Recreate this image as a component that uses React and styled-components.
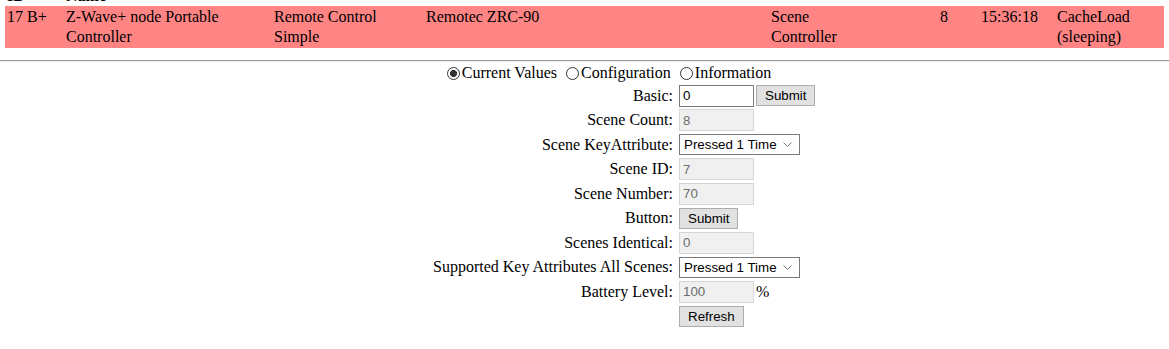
import React from 'react';
import styled, { createGlobalStyle } from 'styled-components';

const GlobalStyle = createGlobalStyle`
  body {
    margin: 0;
    background: #fff;
    color: #000;
    font-family: "Liberation Serif", "Times New Roman", serif;
    font-size: 16px;
  }
`;

const NodeTable = styled.table`
  width: calc(100% - 10px);
  margin: -14px 5px 0;
  border-collapse: collapse;
  border-spacing: 0;
  table-layout: fixed;
`;

const Col = styled.col`
  width: ${(props) => props.$w}px;
`;

const HeadCell = styled.th`
  padding: 0 2px 1px;
  line-height: 19px;
  text-align: left;
  font-weight: bold;
`;

const NodeRow = styled.tr`
  background: ${(props) => props.$color};
`;

const Cell = styled.td`
  padding: 1px 2px;
  line-height: 20px;
  vertical-align: top;
`;

const Rule = styled.hr`
  margin: 12px 0 0;
  height: 0;
  border: 0;
  border-top: 1px solid #9a9a9a;
  border-bottom: 1px solid #eeeeee;
`;

const RadioRow = styled.div`
  display: flex;
  justify-content: center;
  align-items: center;
  height: 22.5px;
  padding-left: 48px;
`;

const RadioOption = styled.label`
  display: flex;
  align-items: center;
  margin-right: 4px;
  white-space: nowrap;
`;

const Radio = styled.input.attrs({ type: 'radio' })`
  appearance: none;
  box-sizing: border-box;
  width: 13px;
  height: 13px;
  margin: 1px 2px 0 5px;
  border: 1px solid #333;
  border-radius: 50%;
  background: #fff;

  &:checked {
    background: radial-gradient(circle, #333 0 3.2px, #fff 3.8px);
  }
`;

const FieldGrid = styled.div`
  display: grid;
  grid-template-columns: 673px auto;
  grid-auto-rows: 22.5px;
  column-gap: 6px;
  row-gap: 2px;
`;

const Label = styled.div`
  display: flex;
  align-items: center;
  justify-content: flex-end;
  white-space: nowrap;
`;

const Control = styled.div`
  display: flex;
  align-items: center;
  gap: 2px;
`;

const TextInput = styled.input`
  box-sizing: border-box;
  width: 75px;
  height: 22px;
  padding: 1px 3px;
  border: 1px solid ${(props) => (props.disabled ? '#d6d6d6' : '#7a7a7a')};
  background: ${(props) => (props.disabled ? '#f0f0f0' : '#fff')};
  color: ${(props) => (props.disabled ? '#6d6d6d' : '#000')};
  font-family: "Liberation Sans", Arial, sans-serif;
  font-size: 13.33px;
  outline: none;
`;

const Button = styled.button`
  box-sizing: border-box;
  height: 21px;
  padding: 1px 8px;
  border: 1px solid #adadad;
  background: #e1e1e1;
  color: #000;
  font-family: "Liberation Sans", Arial, sans-serif;
  font-size: 13.33px;
`;

const SelectWrap = styled.div`
  position: relative;
  width: 121px;
  height: 21px;
`;

const Select = styled.select`
  appearance: none;
  box-sizing: border-box;
  width: 100%;
  height: 100%;
  padding: 0 4px;
  border: 1px solid #7a7a7a;
  border-radius: 0;
  background: #fff;
  color: #000;
  font-family: "Liberation Sans", Arial, sans-serif;
  font-size: 13.33px;
  outline: none;
`;

const Chevron = styled.svg`
  position: absolute;
  right: 8px;
  top: 8px;
  pointer-events: none;
`;

const Unit = styled.span`
  margin-left: 0;
`;

const nodeColumns = [59, 208, 152, 345, 169, 41, 76, 109];

const KeyAttributeSelect = () => (
  <SelectWrap>
    <Select defaultValue="1">
      <option value="1">Pressed 1 Time</option>
      <option value="2">Released</option>
      <option value="3">Held Down</option>
    </Select>
    <Chevron width="9" height="5" viewBox="0 0 9 5">
      <path d="M0.5 0.5 L4.5 4.5 L8.5 0.5" fill="none" stroke="#777" strokeWidth="1" />
    </Chevron>
  </SelectWrap>
);

const Field = ({ label, children }) => (
  <>
    <Label>{label}:</Label>
    <Control>{children}</Control>
  </>
);

export default function App() {
  return (
    <>
      <GlobalStyle />
      <NodeTable>
        <colgroup>
          {nodeColumns.map((w, i) => <Col key={i} $w={w} />)}
        </colgroup>
        <thead>
          <tr>
            <HeadCell>ID</HeadCell>
            <HeadCell>Name</HeadCell>
            <HeadCell />
            <HeadCell />
            <HeadCell />
            <HeadCell />
            <HeadCell />
            <HeadCell />
          </tr>
        </thead>
        <tbody>
          <NodeRow $color="#ff8585">
            <Cell>17 B+</Cell>
            <Cell>Z-Wave+ node Portable<br />Controller</Cell>
            <Cell>Remote Control<br />Simple</Cell>
            <Cell>Remotec ZRC-90</Cell>
            <Cell>Scene<br />Controller</Cell>
            <Cell>8</Cell>
            <Cell>15:36:18</Cell>
            <Cell>CacheLoad<br />(sleeping)</Cell>
          </NodeRow>
        </tbody>
      </NodeTable>

      <Rule />

      <RadioRow>
        <RadioOption><Radio name="view" defaultChecked />Current Values</RadioOption>
        <RadioOption><Radio name="view" />Configuration</RadioOption>
        <RadioOption><Radio name="view" />Information</RadioOption>
      </RadioRow>

      <FieldGrid>
        <Field label="Basic">
          <TextInput defaultValue="0" />
          <Button>Submit</Button>
        </Field>
        <Field label="Scene Count">
          <TextInput disabled value="8" readOnly />
        </Field>
        <Field label="Scene KeyAttribute">
          <KeyAttributeSelect />
        </Field>
        <Field label="Scene ID">
          <TextInput disabled value="7" readOnly />
        </Field>
        <Field label="Scene Number">
          <TextInput disabled value="70" readOnly />
        </Field>
        <Field label="Button">
          <Button>Submit</Button>
        </Field>
        <Field label="Scenes Identical">
          <TextInput disabled value="0" readOnly />
        </Field>
        <Field label="Supported Key Attributes All Scenes">
          <KeyAttributeSelect />
        </Field>
        <Field label="Battery Level">
          <TextInput disabled value="100" readOnly />
          <Unit>%</Unit>
        </Field>
        <Label />
        <Control>
          <Button>Refresh</Button>
        </Control>
      </FieldGrid>
    </>
  );
}
